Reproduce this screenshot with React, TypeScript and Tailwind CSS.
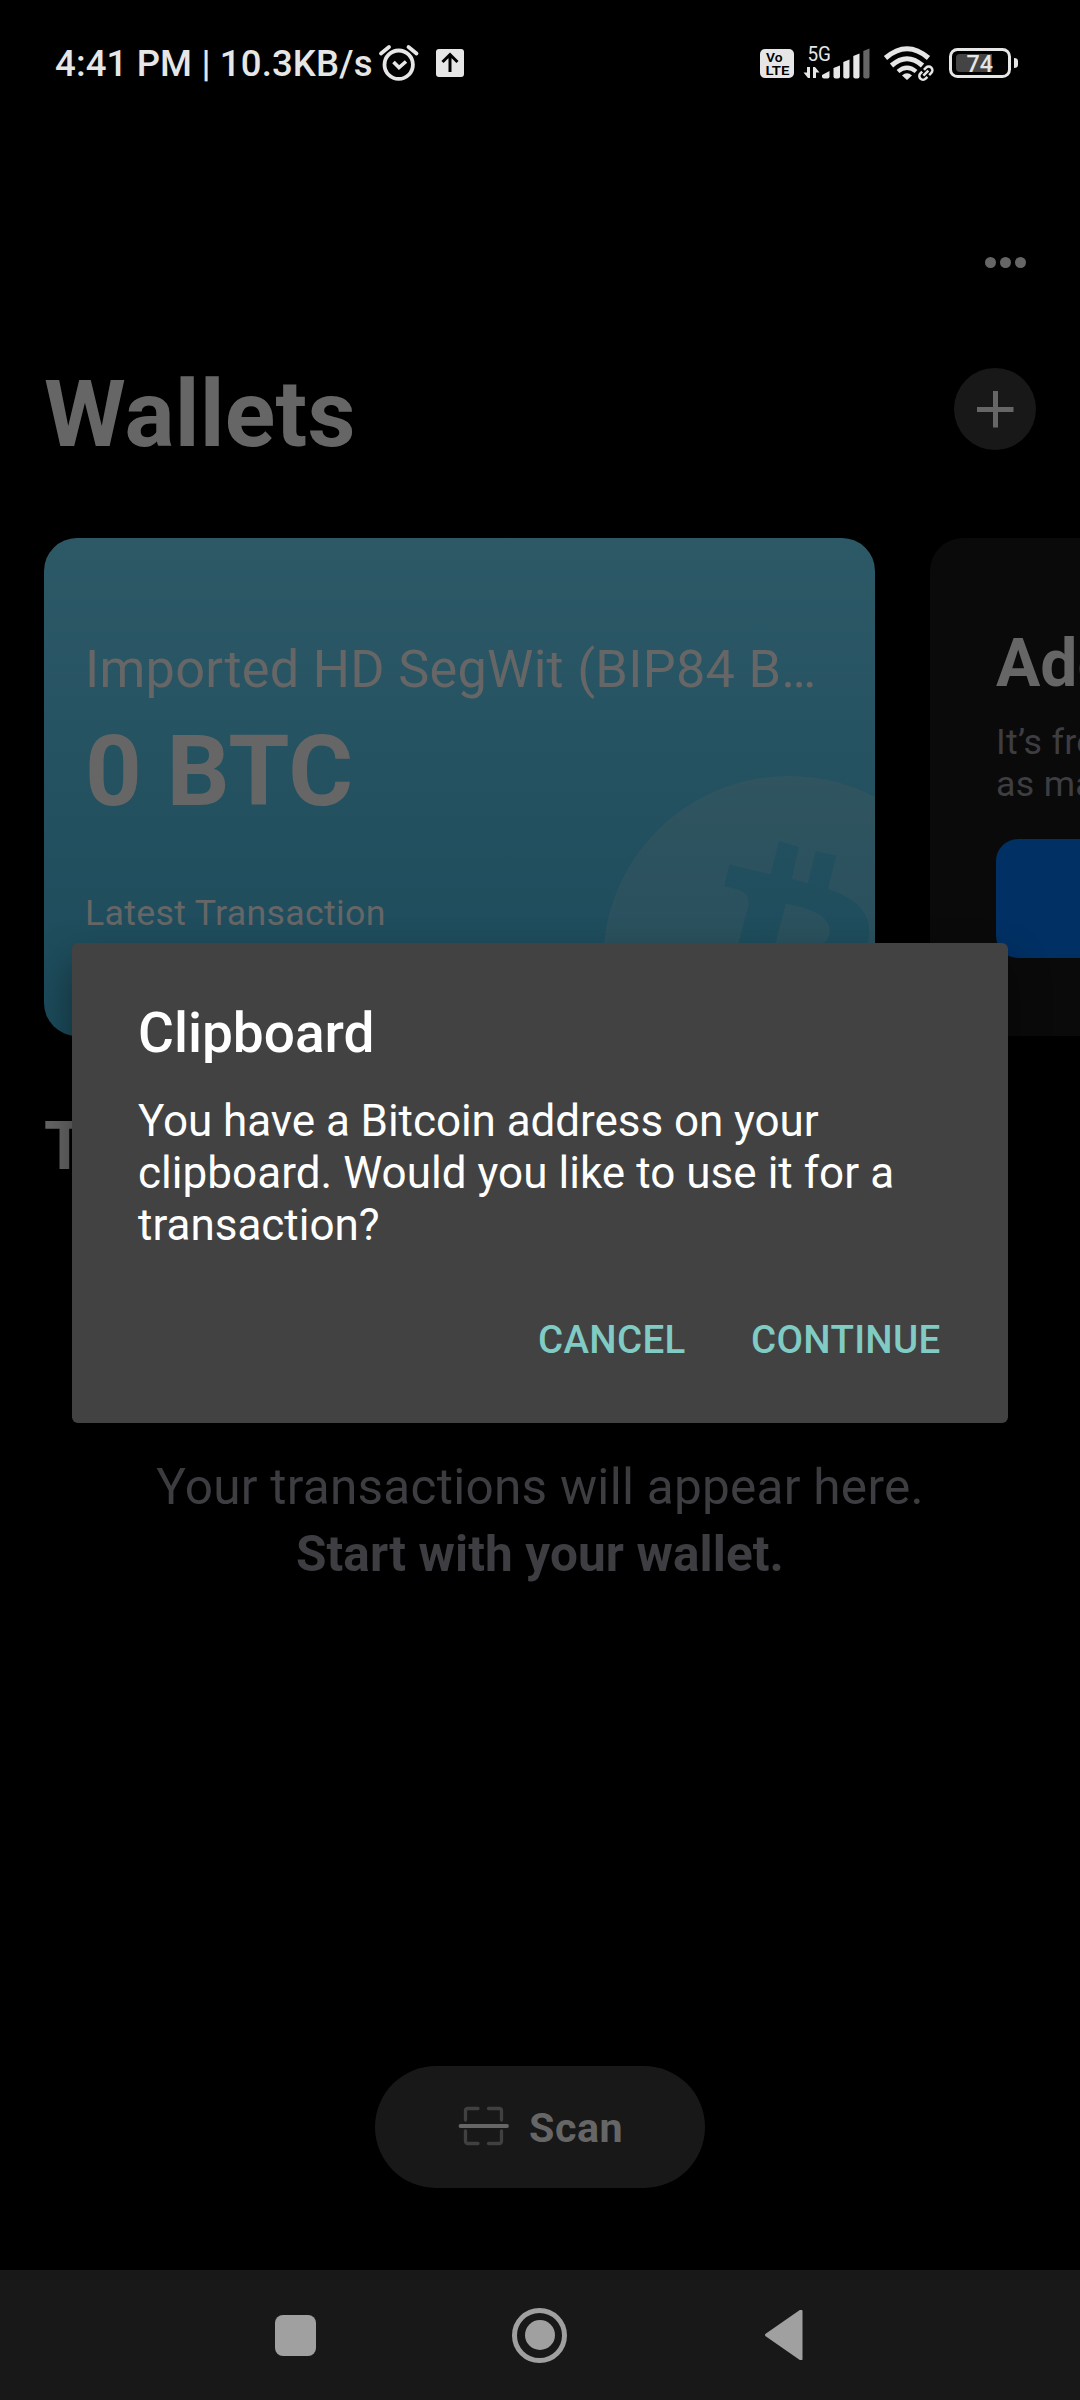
import React from "react";

function StatusBar() {
  return (
    <div className="flex h-[110px] items-start justify-between pt-[42px] pl-[55px] pr-[61px] text-[#e6e6e6]">
      <div className="flex h-[44px] items-center">
        <span className="w-[322px] text-[36.5px] leading-[44px] font-medium tracking-[0.15px] whitespace-nowrap">4:41 PM | 10.3KB/s</span>
        <svg className="h-[44px] w-[44px]" viewBox="377 42 44 44" fill="none" stroke="currentColor">
          <circle cx="398.7" cy="64.7" r="14.2" strokeWidth="3.8" />
          <path d="M393.500 62l5.500 5.500 7-6" strokeWidth="3.6" />
          <path d="M381 53.5l8-6.5M408.500 47l8 6.500" strokeWidth="3.8" strokeLinecap="round" />
        </svg>
        <svg className="ml-[13px] h-[44px] w-[32px]" viewBox="434 42 32 44">
          <rect x="436" y="49" width="28" height="28" rx="3" fill="currentColor" />
          <path d="M450 72V55M442.500 62l7.500-7.500 7.500 7.500" fill="none" stroke="#000" strokeWidth="3" />
        </svg>
      </div>
      <div className="flex h-[44px] items-center">
        <svg className="h-[44px] w-[40px]" viewBox="758 42 40 44">
          <rect x="760" y="49" width="34" height="29" rx="5" fill="currentColor" />
          <text x="766" y="62" fontSize="12.500" fontWeight="600" fill="#000" textLength="16.500" lengthAdjust="spacingAndGlyphs">Vo</text>
          <text x="765.500" y="74.500" fontSize="13" fontWeight="600" fill="#000" textLength="24" lengthAdjust="spacingAndGlyphs">LTE</text>
        </svg>
        <svg className="h-[44px] w-[84px]" viewBox="798 42 84 44" fill="currentColor">
          <text x="807.500" y="60.500" fontSize="20.500" textLength="23.500" lengthAdjust="spacingAndGlyphs">5G</text>
          <path d="M807 67h3v11h-2l-4.500-5.500h3.500zM813 67h2l4.500 5.500h-3.500v5.500h-3z" />
          <path d="M822 75l7.500-4v5.500q0 2-2 2h-3.500q-2 0-2-2z" />
          <path d="M833.500 68l6.500-2.500v11q0 2-2 2h-2.500q-2 0-2-2z" />
          <path d="M843.300 62l6.200-2.500v17q0 2-2 2h-2.200q-2 0-2-2z" />
          <path d="M853.300 56l6.200-2.500v23q0 2-2 2h-2.200q-2 0-2-2z" />
          <path d="M863.300 51l6.200-2.500v28q0 2-2 2h-2.200q-2 0-2-2z" fill="#666" />
        </svg>
        <svg className="h-[44px] w-[56px]" viewBox="882 42 56 44" fill="none" stroke="currentColor">
          <path d="M885.500 58Q907 39.500 928.500 58" strokeWidth="5" />
          <path d="M891.500 65.500Q907 52 922.500 65.500" strokeWidth="5" />
          <path d="M898 71.500Q907 64 916 71.500" strokeWidth="4.200" />
          <path d="M907 80l-5-4.500q5-4.500 10 0z" fill="currentColor" stroke="none" />
          <g strokeWidth="2.500" transform="rotate(-45 925.500 73.500)">
            <path d="M924.500 69.800h-2.500a3.700 3.700 0 0 0 0 7.400h2.500M927 69.800h3a3.700 3.700 0 0 1 0 7.400h-3M922.500 73.500h7" />
          </g>
        </svg>
        <svg className="ml-[8px] h-[44px] w-[73px]" viewBox="946 42 73 44">
          <rect x="950.500" y="49.500" width="59" height="27" rx="7" fill="none" stroke="currentColor" strokeWidth="3" />
          <path d="M960 54h32v18h-32q-4 0-4-4V58q0-4 4-4z" fill="#444" />
          <path d="M1014 58q4 0 4 3v4q0 3-4 3z" fill="currentColor" />
          <text x="966.500" y="71.700" fontSize="23" fontWeight="500" fill="currentColor" textLength="26.500" lengthAdjust="spacingAndGlyphs">74</text>
        </svg>
      </div>
    </div>
  );
}

function BitcoinMark() {
  return (
    <svg className="absolute right-0 bottom-0 h-[296px] w-[275px]" viewBox="600 740 275 296">
      <path
        fill="#666666"
        fillOpacity="0.18"
        fillRule="evenodd"
        d="M603 962a186 186 0 1 1 372 0a186 186 0 1 1-372 0z
           M729.400 864.700L770.700 874.300L779 841.300L799 846.700L791.700 879L807.900 883L815.800 850.700L836.100 855.700L827.900 888.700C852 897 872 910 868.900 936C867 952 860 962 845 966C862 975 868 988 862 1005C853 1030 835 1036 800 1036L715 1036L738.700 942.700L748.300 906C750 896 744 891 736 889L724.200 886z
           M785.900 903.300C800 907 833 912 829.300 934C825 955 792 946 775.500 942.700z"
      />
    </svg>
  );
}

function WalletCards() {
  return (
    <div className="mt-[69px] flex h-[498px] gap-[55px] pl-[44px]">
      <div className="relative flex w-[831px] shrink-0 flex-col overflow-hidden rounded-[33px] bg-linear-to-b from-[#2d5967] to-[#1b4a5a] px-[41px] pt-[101px] text-[#666]">
        <BitcoinMark />
        <span className="relative text-[52.25px] leading-[62px] tracking-[0.27px] whitespace-nowrap">Imported HD SegWit (BIP84 B…</span>
        <span className="relative mt-[12px] text-[99px] leading-[116px] font-bold whitespace-nowrap">0 BTC</span>
        <span className="relative mt-[63px] text-[35.75px] leading-[42px] tracking-[0.3px] whitespace-nowrap">Latest Transaction</span>
      </div>
      <div className="flex w-[831px] shrink-0 flex-col rounded-[33px] bg-[#0a0a0a] pt-[87px] pl-[66px]">
        <span className="text-[66px] leading-[78px] font-bold whitespace-nowrap text-[#666]">Add a wallet</span>
        <span className="mt-[18px] text-[35.75px] leading-[42px] tracking-[0.3px] whitespace-pre text-[#3d3d42]">{"It’s free and you can create\nas many as you like."}</span>
        <div className="mt-[34px] h-[119px] w-[420px] rounded-[22px] bg-[#003064]" />
      </div>
    </div>
  );
}

function ScanButton() {
  return (
    <div className="mx-auto mt-[478px] flex h-[122px] w-[330px] rounded-full bg-[#181818] pt-[38px] pl-[81px]">
      <svg className="h-[44px] w-[56px]" viewBox="456 2104 56 44" fill="none" strokeWidth="3.300" strokeLinecap="round">
        <path d="M465.500 2120v-9q0-2.500 2.500-2.500h10M488.500 2108.500h10.500q2.500 0 2.500 2.500v9M465.500 2131v10q0 2.500 2.500 2.500h10M488.500 2143.500h10.500q2.500 0 2.500-2.500v-10" stroke="#404040" />
        <path d="M460.500 2126h46.500" stroke="#666" strokeWidth="3.800" />
      </svg>
      <span className="ml-[17px] text-[41.25px] leading-[48px] font-bold tracking-[0.5px] text-[#666]">Scan</span>
    </div>
  );
}

function NavBar() {
  return (
    <div className="absolute inset-x-0 bottom-0 flex h-[130px] items-center justify-between bg-[#181818] pr-[273px] pl-[275px]">
      <div className="size-[41px] rounded-[8px] bg-[#a0a0a0]" />
      <div className="flex size-[55px] items-center justify-center rounded-full border-[5px] border-[#a0a0a0]">
        <div className="size-[30px] rounded-full bg-[#a0a0a0]" />
      </div>
      <svg className="h-[50px] w-[44px]" viewBox="762.500 2310 44 50">
        <path d="M766 2335l34.500-24v48z" fill="#a0a0a0" stroke="#a0a0a0" strokeWidth="3" strokeLinejoin="round" transform="translate(0 0.700) scale(1 0.9997)" />
      </svg>
    </div>
  );
}

function ClipboardDialog() {
  return (
    <div className="absolute top-[943px] left-[72px] flex h-[480px] w-[936px] flex-col rounded-[6px] bg-[#424242] px-[66px] pt-[57px] text-white shadow-[0_20px_40px_rgba(0,0,0,0.4)]">
      <span className="text-[55px] leading-[66px] font-medium">Clipboard</span>
      <p className="mt-[29px] text-[44px] leading-[52px] whitespace-nowrap">
        <span className="block tracking-[-0.06px]">You have a Bitcoin address on your</span>
        <span className="block tracking-[0.04px]">clipboard. Would you like to use it for a</span>
        <span className="block">transaction?</span>
      </p>
      <div className="mt-[66px] flex justify-end gap-[65.5px] pr-[1.5px] text-[38.5px] leading-[46px] font-medium tracking-[0.3px] text-[#80cbc4]">
        <span>CANCEL</span>
        <span>CONTINUE</span>
      </div>
    </div>
  );
}

export default function App() {
  return (
    <div className="relative h-[2400px] w-[1080px] overflow-hidden bg-black font-[Roboto,sans-serif]">
      <StatusBar />
      <div className="flex h-[249px] items-start justify-end pt-[146px] pr-[54px]">
        <div className="flex gap-[4.500px] pt-[1px]">
          <div className="size-[10.700px] rounded-full bg-[#666]" />
          <div className="size-[10.700px] rounded-full bg-[#666]" />
          <div className="size-[10.700px] rounded-full bg-[#666]" />
        </div>
      </div>
      <div className="flex h-[110px] items-start justify-between pr-[44px] pl-[44px]">
        <span className="text-[93.5px] leading-[110px] font-bold tracking-[0.25px] text-[#666]">Wallets</span>
        <div className="mt-[9px] flex size-[82px] items-center justify-center rounded-full bg-[#181818]">
          <svg className="size-[38px]" viewBox="0 0 38 38">
            <path d="M19.500 1v36.500M1 19.500h36.500" stroke="#666" strokeWidth="5" />
          </svg>
        </div>
      </div>
      <WalletCards />
      <div className="mt-[72px] pl-[44px] text-[66px] leading-[78px] font-bold text-[#666]">Transactions</div>
      <div className="mt-[268px] text-center text-[49.5px] leading-[67px] text-[#3d3d42]">
        <p className="tracking-[0.26px]">Your transactions will appear here.</p>
        <p className="font-bold tracking-[0.1px]">Start with your wallet.</p>
      </div>
      <ScanButton />
      <NavBar />
      <ClipboardDialog />
    </div>
  );
}
